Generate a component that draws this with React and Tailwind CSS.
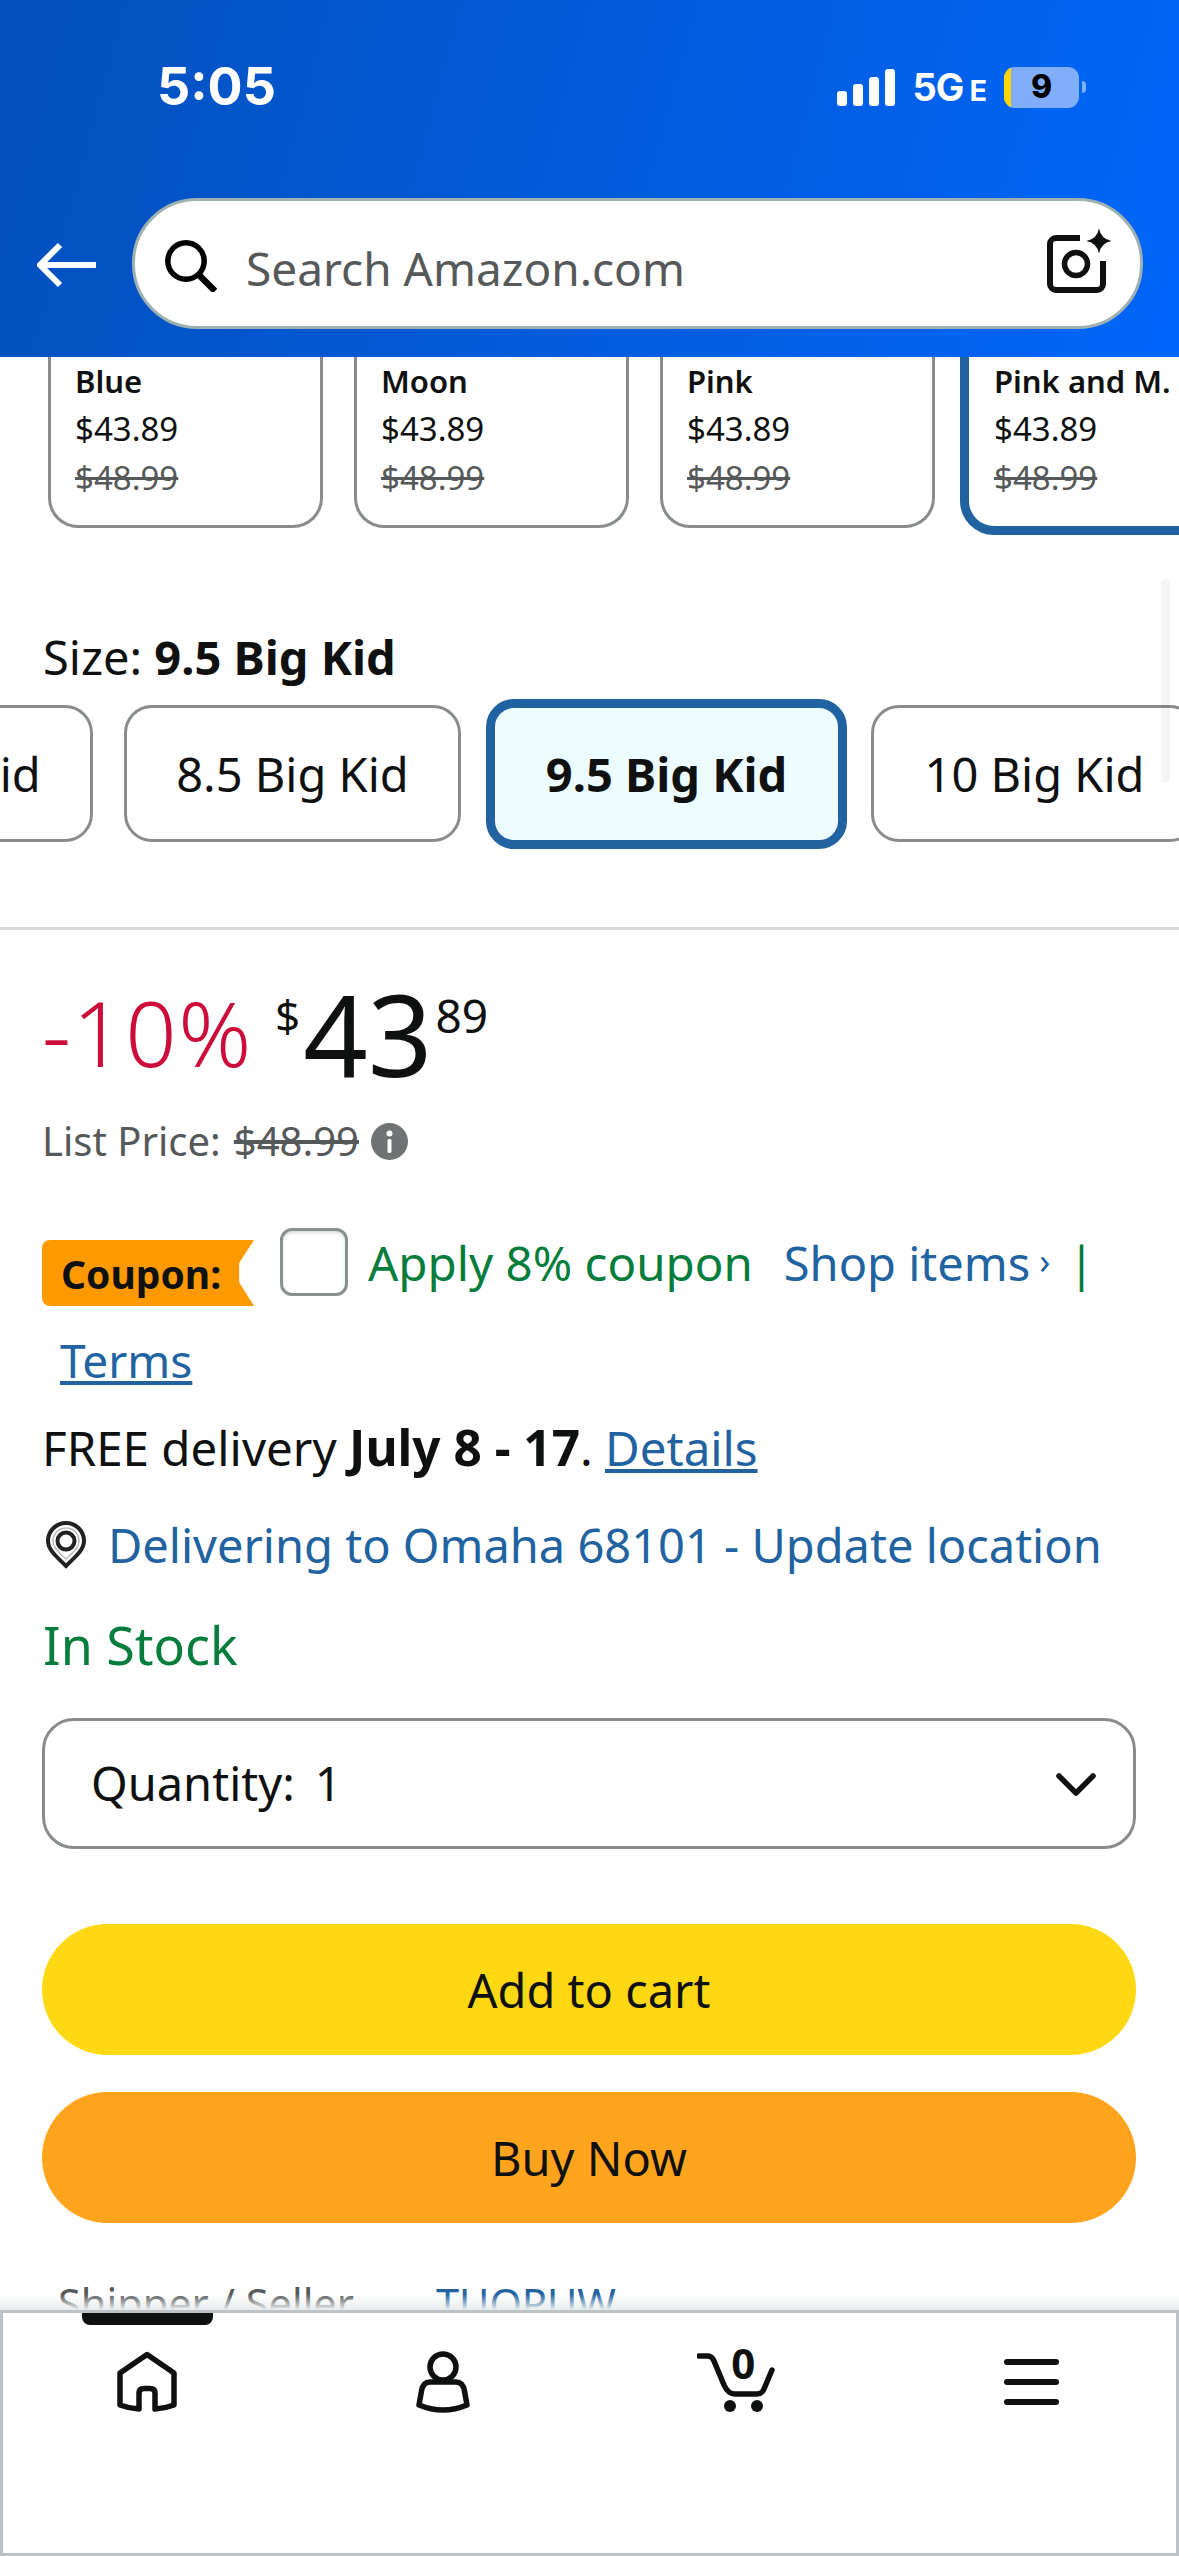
const FONT = "font-['Noto_Sans','Open_Sans',sans-serif]";

const swatches = [
  { name: "Blue" },
  { name: "Moon" },
  { name: "Pink" },
  { name: "Pink and M.", selected: true },
];

function SignalBars() {
  return (
    <div className="flex items-end gap-[6px] h-[37px]">
      <div className="w-[10px] h-[15px] rounded-[3px] bg-white" />
      <div className="w-[10px] h-[22px] rounded-[3px] bg-white" />
      <div className="w-[10px] h-[29px] rounded-[3px] bg-white" />
      <div className="w-[10px] h-[37px] rounded-[3px] bg-white" />
    </div>
  );
}

function Battery() {
  return (
    <div className="flex items-center ml-[17px]">
      <div className="relative w-[75px] h-[41px] rounded-[11px] bg-[#80aefb] overflow-hidden flex items-center justify-center">
        <div className="absolute left-0 top-0 bottom-0 w-[7px] bg-[#ffd400]" />
        <span className="font-['Inter',sans-serif] font-extrabold text-[32px] leading-none text-black">9</span>
      </div>
      <div className="ml-[3px] w-[4px] h-[12px] rounded-r-[4px] bg-[#80aefb]" />
    </div>
  );
}

function Header() {
  return (
    <header className="h-[357px] shrink-0 bg-[linear-gradient(105deg,#0450bc,#0066fa)] flex flex-col">
      <div className="flex items-center h-[40px] mt-[67px] pl-[157px] pr-[93px]">
        <span className="font-['Inter',sans-serif] font-bold text-[52px] leading-none text-white">5:05</span>
        <div className="ml-auto flex items-center">
          <SignalBars />
          <div className="ml-[18px] flex items-baseline font-['Inter',sans-serif] font-bold text-white leading-none">
            <span className="text-[38px] tracking-[-1px]">5G</span>
            <span className="text-[29px] ml-[6px]">E</span>
          </div>
          <Battery />
        </div>
      </div>
      <div className="flex items-center mt-[91px] pl-[37px]">
        <svg className="mt-[3px]" width="59" height="48" viewBox="0 0 59 48" fill="none" stroke="#fff" strokeWidth="6">
          <path d="M59 24H5M23 4 3 24 23 44" />
        </svg>
        <div className="ml-[36px] w-[1011px] h-[131px] rounded-[65px] border-[3px] border-[#9fb1b1] bg-white flex items-center pl-[30px] pr-[27px]">
          <svg className="mt-[4px]" width="52" height="52" viewBox="0 0 52 52" fill="none" stroke="#000" strokeWidth="5.5">
            <circle cx="21" cy="21" r="18.2" />
            <path d="M33 34 50 51" strokeWidth="6.5" />
          </svg>
          <span className={`${FONT} ml-[29px] mt-[8px] text-[46px] leading-none text-[#565959]`}>Search Amazon.com</span>
          <svg className="ml-auto mb-[6px]" width="66" height="66" viewBox="0 0 66 66" fill="none" stroke="#0f1111" strokeWidth="6">
            <path d="M33 10H9a6 6 0 0 0-6 6V56a6 6 0 0 0 6 6H50a6 6 0 0 0 6-6V33" />
            <circle cx="29" cy="36" r="11.5" strokeWidth="5.5" />
            <path d="M52 .5Q54 11 64.5 13 54 15 52 25.5 50 15 39.5 13 50 11 52 .5Z" fill="#0f1111" stroke="none" />
          </svg>
        </div>
      </div>
    </header>
  );
}

function Swatches() {
  return (
    <div className="flex gap-[31px] pl-[48px] h-[180px] overflow-hidden shrink-0">
      {swatches.map((s) => (
        <div
          key={s.name}
          className={
            s.selected
              ? "w-[274px] h-[178px] shrink-0 rounded-b-[34px] border-x-[9px] border-b-[9px] border-[#2162a1] pl-[25px] ml-[-6px]"
              : "w-[275px] h-[171px] shrink-0 rounded-b-[30px] border-x-[3px] border-b-[3px] border-[#888c8c] pl-[24px]"
          }
        >
          <div className="text-[31px] leading-[48px] font-semibold text-[#0f1111] whitespace-nowrap">{s.name}</div>
          <div className="text-[33px] leading-[48px] text-[#0f1111]">$43.89</div>
          <div className="text-[33px] leading-[48px] text-[#565959] line-through translate-y-[1px]">$48.99</div>
        </div>
      ))}
    </div>
  );
}

function SizeButton({ label, selected, className = "" }) {
  return (
    <div
      className={`${className} shrink-0 h-[137px] pt-[2px] rounded-[28px] flex items-center justify-center text-[47px] leading-none whitespace-nowrap text-[#0f1111] ${
        selected ? "bg-[#edfdff] border-[9px] border-[#2162a1] font-bold" : "bg-white border-[3px] border-[#888c8c]"
      }`}
    >
      {label}
    </div>
  );
}

function Sizes() {
  return (
    <div className="flex items-center gap-[31px] h-[153px] mt-[10px] overflow-hidden shrink-0">
      <SizeButton label="7.5 Big Kid" className="w-[337px] ml-[-244px]" />
      <SizeButton label="8.5 Big Kid" className="w-[337px]" />
      <SizeButton label="9.5 Big Kid" selected className="w-[361px] h-[150px] ml-[-6px] mr-[-7px]" />
      <SizeButton label="10 Big Kid" className="w-[327px]" />
    </div>
  );
}

function Price() {
  return (
    <div className="flex items-start h-[112px] mt-[47px] ml-[42px] text-[#0f1111]">
      <span className="w-[233px] text-[90px] leading-none font-light tracking-[1.5px] text-[#cc0c39] mt-[10px] whitespace-nowrap">-10%</span>
      <span className="text-[44px] leading-none mt-[16px]">$</span>
      <span className="text-[113px] leading-none ml-[3px]">43</span>
      <span className="text-[46px] leading-none mt-[15px] ml-[3px]">89</span>
    </div>
  );
}

function InfoIcon() {
  return (
    <svg className="ml-[12px]" width="37" height="37" viewBox="0 0 37 37">
      <circle cx="18.5" cy="18.5" r="18.5" fill="#6f7373" />
      <circle cx="18.5" cy="10.5" r="3" fill="#fff" />
      <rect x="16.5" y="16" width="4" height="14" rx="1.5" fill="#fff" />
    </svg>
  );
}

function Coupon() {
  return (
    <div className="flex items-start h-[70px] mt-[62px] ml-[42px] text-[47px] leading-[50px] whitespace-nowrap">
      <div className="mt-[12px] w-[212px] h-[66px] rounded-l-[8px] bg-[#ff9900] [clip-path:polygon(0_0,100%_0,93%_35%,93%_64%,100%_100%,0_100%)] flex items-center pl-[19px]">
        <span className="text-[39px] leading-none font-bold text-[#0f1111]">Coupon:</span>
      </div>
      <div className="ml-[26px] w-[68px] h-[68px] rounded-[12px] border-[3px] border-[#8a8f8f] bg-white shadow-[inset_0_2px_3px_rgba(15,17,17,0.15)]" />
      <span className="ml-[20px] mt-[10px] text-[47.5px] text-[#067d3c]">Apply 8% coupon</span>
      <span className="ml-[31px] mt-[10px] text-[#2162a1]">Shop items</span>
      <span className="ml-[9px] mt-[8px] text-[#2162a1] text-[36px]">›</span>
      <span className="ml-[18px] mt-[10px] text-[#067d3c]">|</span>
    </div>
  );
}

function PinIcon() {
  return (
    <svg width="42" height="48" viewBox="0 0 42 48" fill="none" stroke="#222" strokeWidth="4">
      <path d="M21 45C12 36 3 29 3 20a18 18 0 0 1 36 0c0 9-9 16-18 25Z" />
      <circle cx="21" cy="20" r="8.5" />
      <path d="M21 38C15 32 8 27 8 20a13 13 0 0 1 26 0c0 7-7 12-13 18Z" stroke="#bbb" strokeWidth="1.5" />
    </svg>
  );
}

function ChevronDown() {
  return (
    <svg width="40" height="24" viewBox="0 0 40 24" fill="none" stroke="#0f1111" strokeWidth="5.5" strokeLinecap="round" strokeLinejoin="round">
      <path d="M3 4 20 21 37 4" />
    </svg>
  );
}

function BigButton({ label, className }) {
  return (
    <div className={`${className} ml-[42px] w-[1094px] h-[131px] pt-[2px] rounded-[66px] flex items-center justify-center text-[47px] leading-none text-[#0f1111]`}>
      {label}
    </div>
  );
}

function Nav() {
  return (
    <nav className="relative h-[246px] shrink-0 bg-white border-[3px] border-[#bbc3c6] grid grid-cols-4 justify-items-center items-start">
      <div className="absolute left-[79px] top-0 w-[131px] h-[12px] rounded-b-[8px] bg-[#0f1111]" />
      <svg className="mt-[38px] ml-[-5px]" width="60" height="61" viewBox="0 0 60 61" fill="none" stroke="#0f1111" strokeWidth="5.5" strokeLinejoin="round">
        <path d="M3 22 30 3.5 57 22V54Q48 57.5 38 58V42Q38 37.5 33 37.5H27Q22 37.5 22 42V58Q12 57.5 3 54Z" />
      </svg>
      <svg className="mt-[38px]" width="54" height="62" viewBox="0 0 54 62" fill="none" stroke="#0f1111" strokeWidth="5.5" strokeLinejoin="round">
        <circle cx="27" cy="16" r="13" />
        <path d="M14 31H40Q47 31 48.5 40L51 54Q27 64 3 54L5.5 40Q7 31 14 31Z" />
      </svg>
      <div className="relative mt-[34px] w-[78px] h-[67px]">
        <svg width="78" height="67" viewBox="0 0 78 67" fill="none" stroke="#0f1111" strokeWidth="5.5" strokeLinecap="round" strokeLinejoin="round">
          <path d="M2 9H11Q15 9 17 14L27 38Q31 47 38 47H60Q65 47 67 42L75 23" />
          <circle cx="33" cy="59" r="6" fill="#0f1111" stroke="none" />
          <circle cx="60" cy="59" r="6" fill="#0f1111" stroke="none" />
        </svg>
        <span className="absolute left-[34px] top-[-6px] text-[42px] leading-[44px] font-bold text-[#0f1111]">0</span>
      </div>
      <div className="mt-[46px] ml-[5px] flex flex-col gap-[14px]">
        <div className="w-[55px] h-[6px] rounded-full bg-[#0f1111]" />
        <div className="w-[55px] h-[6px] rounded-full bg-[#0f1111]" />
        <div className="w-[55px] h-[6px] rounded-full bg-[#0f1111]" />
      </div>
    </nav>
  );
}

export default function App() {
  return (
    <div className={`${FONT} w-[1179px] h-[2556px] flex flex-col overflow-hidden bg-white text-[#0f1111]`}>
      <Header />
      <main className="relative flex-1 min-h-0 overflow-hidden flex flex-col">
        <Swatches />
        <div className="mt-[90px] ml-[43px] text-[47px] leading-[60px] shrink-0">
          Size: <span className="font-bold">9.5 Big Kid</span>
        </div>
        <Sizes />
        <div className="absolute right-[9px] top-[222px] w-[9px] h-[204px] rounded-full bg-black/[0.04]" />
        <div className="h-[3px] mt-[77px] bg-[#d5d9d9] shrink-0" />
        <Price />
        <div className="flex items-center h-[50px] mt-[27px] ml-[42px] text-[40px] leading-none text-[#565959] shrink-0">
          <span>List Price:</span>
          <span className="ml-[13px] line-through">$48.99</span>
          <InfoIcon />
        </div>
        <Coupon />
        <div className="mt-[32px] ml-[60px] text-[46px] leading-[60px] text-[#2162a1] underline shrink-0">Terms</div>
        <div className="mt-[27px] ml-[42px] h-[60px] text-[47.5px] leading-[60px] shrink-0">
          FREE delivery <span className="font-bold text-[49.5px]">July 8 - 17</span>. <span className="text-[#2162a1] underline">Details</span>
        </div>
        <div className="mt-[38px] ml-[45px] flex items-center h-[60px] text-[47px] leading-[60px] text-[#2162a1] shrink-0">
          <PinIcon />
          <span className="ml-[21px] whitespace-nowrap">Delivering to Omaha 68101 - Update location</span>
        </div>
        <div className="mt-[40px] ml-[43px] text-[52px] leading-[60px] text-[#067d3c] shrink-0">In Stock</div>
        <div className="mt-[43px] ml-[42px] w-[1094px] h-[131px] rounded-[32px] border-[3px] border-[#888c8c] bg-white flex items-center pl-[46px] pr-[37px] shrink-0">
          <span className="text-[47px] leading-none">Quantity:</span>
          <span className="text-[47px] leading-none ml-[20px]">1</span>
          <div className="ml-auto">
            <ChevronDown />
          </div>
        </div>
        <BigButton label="Add to cart" className="mt-[75px] bg-[#ffd814] shrink-0" />
        <BigButton label="Buy Now" className="mt-[37px] bg-[#ffa41c] shrink-0" />
        <div className="mt-[55px] ml-[58px] flex text-[41.5px] leading-[50px] shrink-0">
          <span className="text-[#565959] w-[378px]">Shipper / Seller</span>
          <span className="text-[#2162a1]">TUOPUW</span>
        </div>
        <div className="absolute left-0 right-0 bottom-0 h-[16px] bg-gradient-to-b from-transparent to-[#e9eded]" />
      </main>
      <Nav />
    </div>
  );
}
